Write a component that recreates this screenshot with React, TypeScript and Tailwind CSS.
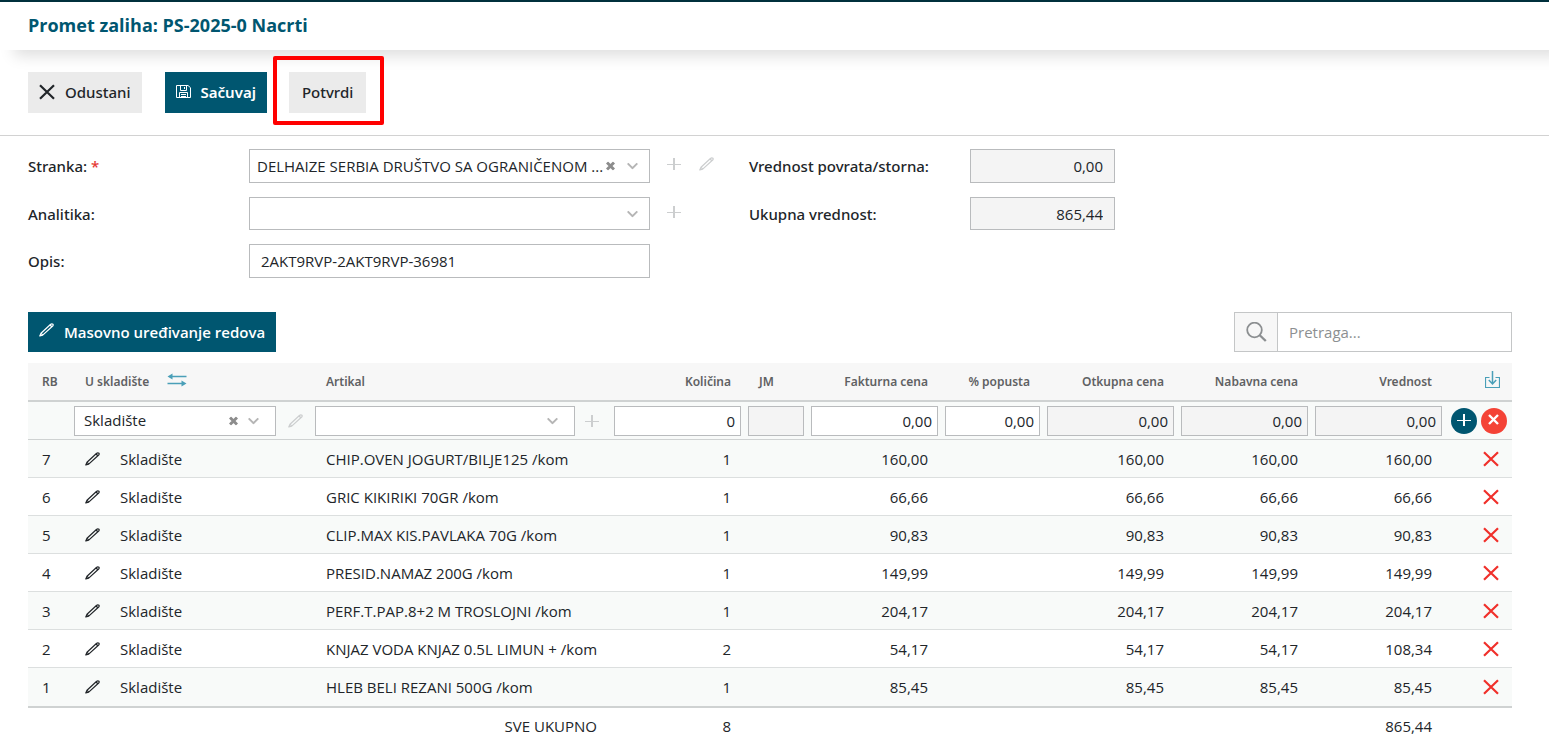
import type { ReactNode } from "react";

const ROWS = [
  { rb: 7, item: "CHIP.OVEN JOGURT/BILJE125 /kom", qty: 1, price: "160,00", total: "160,00" },
  { rb: 6, item: "GRIC KIKIRIKI 70GR /kom", qty: 1, price: "66,66", total: "66,66" },
  { rb: 5, item: "CLIP.MAX KIS.PAVLAKA 70G /kom", qty: 1, price: "90,83", total: "90,83" },
  { rb: 4, item: "PRESID.NAMAZ 200G /kom", qty: 1, price: "149,99", total: "149,99" },
  { rb: 3, item: "PERF.T.PAP.8+2 M TROSLOJNI /kom", qty: 1, price: "204,17", total: "204,17" },
  { rb: 2, item: "KNJAZ VODA KNJAZ 0.5L LIMUN + /kom", qty: 2, price: "54,17", total: "108,34" },
  { rb: 1, item: "HLEB BELI REZANI 500G /kom", qty: 1, price: "85,45", total: "85,45" },
];

function Cross({ className = "" }: { className?: string }) {
  return (
    <svg viewBox="0 0 16 16" className={className} fill="none" stroke="currentColor" strokeWidth="2.2" aria-hidden="true">
      <path d="M1 1.2 15 14.8M15 1.2 1 14.8" />
    </svg>
  );
}

function Pencil({ className = "" }: { className?: string }) {
  return (
    <svg width="15" height="14" viewBox="0 0 15 14" className={className} fill="none" stroke="currentColor" strokeWidth="1.2" strokeLinejoin="round" aria-hidden="true">
      <path d="M.8 13 2 10.2 11.4 1.5Q12.8.3 13.9 1.2 14.6 2.1 13.4 3.3L3.7 12.1ZM2 10.2 3.7 12.1M11 2 12.9 3.8" />
    </svg>
  );
}

function Plus({ className = "" }: { className?: string }) {
  return (
    <svg width="14" height="14" viewBox="0 0 14 14" className={className} fill="none" stroke="currentColor" aria-hidden="true">
      <path d="M7 1V13" strokeWidth="2" />
      <path d="M0 7.5H14" />
    </svg>
  );
}

function Floppy() {
  return (
    <svg width="15" height="14" viewBox="0 0 15 14" fill="none" stroke="currentColor" aria-hidden="true">
      <path d="M.5.5H12L14.5 2.7V12.5H.5Z" />
      <path d="M4.5.5V5.5H10.5V.5M8.5 2V4M3.5 12.5V7.5H11.5V12.5M5 9.5H10M5 11.5H10" />
    </svg>
  );
}

function FieldLabel({ htmlFor, children }: { htmlFor: string; children: ReactNode }) {
  return (
    <label htmlFor={htmlFor} className="w-[221px] font-['Noto_Sans',sans-serif] font-medium">
      {children}
    </label>
  );
}

function SelectBox({ id, label, options, className, clearable = false, inCell = false }: {
  id: string;
  label?: string;
  options: string[];
  className: string;
  clearable?: boolean;
  inCell?: boolean;
}) {
  return (
    <div className={`relative ${className}`}>
      <select
        id={id}
        aria-label={label}
        className={`block h-full w-full appearance-none border border-[#b9bbbd] bg-white pr-[44px] outline-none ${inCell ? "pb-[2px] pl-[9px]" : "pl-[7px]"}`}
      >
        {options.map((o) => (
          <option key={o}>{o}</option>
        ))}
      </select>
      {clearable && (
        <button type="button" aria-label="Obriši" className={`absolute top-1/2 -translate-y-1/2 text-[#8c8c8c] ${inCell ? "right-[38px]" : "right-[35px]"}`}>
          <svg width="9" height="9" viewBox="0 0 9 9" stroke="currentColor" strokeWidth="3" className="block">
            <path d="M1 1 8 8M8 1 1 8" />
          </svg>
        </button>
      )}
      <svg width="11" height="7" viewBox="0 0 11 7" fill="none" stroke="#b5b5b5" strokeWidth="2" className={`pointer-events-none absolute top-1/2 -translate-y-1/2 ${inCell ? "right-[17px]" : "right-3"}`}>
        <path d="M.7.9 5.5 5.6 10.3.9" />
      </svg>
    </div>
  );
}

function Amount({ label, value, readOnly = false }: { label: string; value: string; readOnly?: boolean }) {
  return (
    <input
      aria-label={label}
      defaultValue={value}
      readOnly={readOnly}
      className="block h-[30px] w-full border border-[#b9bbbd] bg-white px-[5px] text-right outline-none read-only:bg-[#f4f4f4]"
    />
  );
}

function Th({ children, right = false }: { children?: ReactNode; right?: boolean }) {
  return (
    <th className={`h-[39px] border-b-2 border-[#cfd2d2] font-semibold ${right ? "pr-[14px] text-right" : "pl-[14px] text-left"}`}>
      {children}
    </th>
  );
}

export default function App() {
  return (
    <div className="min-h-screen bg-white font-['Open_Sans','Noto_Sans',sans-serif] text-[15px] leading-5 text-[#212529]">
      <header className="relative h-[50px] border-t-2 border-[#00303c] bg-white px-7 shadow-[14px_6px_14px_rgba(0,0,0,0.13)]">
        <h1 className="pt-[11px] text-lg leading-6 font-bold text-[#005670]">Promet zaliha: PS-2025-0 Nacrti</h1>
      </header>

      {/* Toolbar */}
      <div className="flex border-b border-[#d2d2d2] px-7 pt-[22px] pb-[22px] font-['Noto_Sans',sans-serif] font-medium">
        <button type="button" className="flex h-[41px] items-center gap-[10px] bg-[#ebebeb] px-[11px] pb-[2px]">
          <Cross className="h-4 w-4" />
          Odustani
        </button>
        <button type="button" className="ml-[23px] flex h-[41px] items-center gap-[10px] bg-[#005670] px-[11px] pb-[2px] font-semibold text-white">
          <Floppy />
          Sačuvaj
        </button>
        <div className="relative ml-[22px]">
          <button type="button" className="h-[41px] bg-[#ebebeb] px-[13px] pb-[2px]">Potvrdi</button>
          <span className="pointer-events-none absolute -top-4 -right-[18px] -bottom-3 -left-4 rounded-[2px] border-4 border-[#ff0000]" />
        </div>
      </div>

      {/* Document header */}
      <div className="flex px-7 pt-[13px]">
        <div className="flex w-[721px] flex-col gap-[14px]">
          <div className="flex items-center">
            <FieldLabel htmlFor="stranka">
              Stranka: <span className="text-[#e53935]">*</span>
            </FieldLabel>
            <SelectBox id="stranka" clearable options={["DELHAIZE SERBIA DRUŠTVO SA OGRANIČENOM ..."]} className="h-[34px] w-[401px]" />
            <button type="button" aria-label="Dodaj stranku" className="ml-[17px] pb-1 text-[#cccecf]"><Plus /></button>
            <button type="button" aria-label="Uredi stranku" className="ml-[18px] pb-1 text-[#cccecf]"><Pencil /></button>
          </div>
          <div className="flex items-center">
            <FieldLabel htmlFor="analitika">Analitika:</FieldLabel>
            <SelectBox id="analitika" options={[""]} className="h-[33px] w-[401px]" />
            <button type="button" aria-label="Dodaj analitiku" className="ml-[17px] pb-1 text-[#cccecf]"><Plus /></button>
          </div>
          <div className="flex items-center">
            <FieldLabel htmlFor="opis">Opis:</FieldLabel>
            <input id="opis" defaultValue="2AKT9RVP-2AKT9RVP-36981" className="h-[34px] w-[401px] border border-[#b9bbbd] px-[11px] outline-none" />
          </div>
        </div>
        <div className="flex flex-col gap-[14px]">
          <div className="flex items-center">
            <FieldLabel htmlFor="povrat">Vrednost povrata/storna:</FieldLabel>
            <input id="povrat" readOnly value="0,00" className="h-[34px] w-[145px] border border-[#b9bbbd] bg-[#f4f4f4] px-[11px] text-right outline-none" />
          </div>
          <div className="flex items-center">
            <FieldLabel htmlFor="ukupno">Ukupna vrednost:</FieldLabel>
            <input id="ukupno" readOnly value="865,44" className="h-[33px] w-[145px] border border-[#b9bbbd] bg-[#f4f4f4] px-[11px] text-right outline-none" />
          </div>
        </div>
      </div>

      <main className="pt-[34px] pr-[37px] pl-7">
        <div className="flex items-center justify-between">
          <button type="button" className="flex h-10 items-center gap-[10px] bg-[#005670] px-[11px] font-semibold text-white">
            <Pencil className="mb-1" />
            Masovno uređivanje redova
          </button>
          <div className="flex h-10 w-[278px] border border-[#c4c6c7]">
            <button type="button" aria-label="Traži" className="flex w-[43px] items-center justify-center border-r border-[#c4c6c7] bg-[#f7f7f7] text-[#8c8f91]">
              <svg width="22" height="20" viewBox="0 0 22 20" fill="none" stroke="currentColor" strokeWidth="1.8">
                <circle cx="9.5" cy="8" r="7.3" />
                <path d="M14.5 13 20.8 19" strokeWidth="2.4" />
              </svg>
            </button>
            <input aria-label="Pretraga" placeholder="Pretraga..." className="min-w-0 flex-1 px-[11px] outline-none placeholder:text-[#8c8f91]" />
          </div>
        </div>

        {/* Line items */}
        <table className="mt-[11px] w-full table-fixed border-separate border-spacing-0">
          <colgroup>
            <col className="w-[43px]" />
            <col className="w-[241px]" />
            <col />
            <col className="w-[134px]" />
            <col className="w-[63px]" />
            <col className="w-[134px]" />
            <col className="w-[102px]" />
            <col className="w-[134px]" />
            <col className="w-[134px]" />
            <col className="w-[134px]" />
            <col className="w-[66px]" />
          </colgroup>
          <thead className="bg-[#f7f7f7] font-['Noto_Sans',sans-serif] text-xs text-[#5f6163]">
            <tr>
              <Th>RB</Th>
              <Th>
                <span className="flex items-center gap-[18px]">
                  U skladište
                  <svg width="20" height="14" viewBox="0 0 20 14" className="mb-1" fill="#4a9fb8" stroke="#4a9fb8">
                    <path d="M3 3.5H19.5M.5 10.5H17" strokeWidth="1.4" />
                    <path d="M5.5.5V6.5L.5 3.5ZM14.5 7.5V13.5L19.5 10.5Z" stroke="none" />
                  </svg>
                </span>
              </Th>
              <Th>Artikal</Th>
              <Th right>Količina</Th>
              <Th>JM</Th>
              <Th right>Fakturna cena</Th>
              <Th right>% popusta</Th>
              <Th right>Otkupna cena</Th>
              <Th right>Nabavna cena</Th>
              <Th right>Vrednost</Th>
              <Th right>
                <button type="button" aria-label="Preuzmi" className="block pb-1 pl-[39px] text-[#4a9fb8]">
                  <svg width="15" height="18" viewBox="0 0 15 18" fill="none" stroke="currentColor">
                    <path d="M4.5 6.5H.5V16.5H14.5V6.5H10.5" strokeWidth="1.2" />
                    <path d="M7.5 0V13M3.8 9 7.5 13 11.2 9" strokeWidth="1.5" />
                  </svg>
                </button>
              </Th>
            </tr>
          </thead>
          <tbody>
            <tr className="bg-[#f8faf9] [&>td]:h-[38px] [&>td]:border-b [&>td]:border-[#cfd2d2] [&>td]:pr-1 [&>td]:pl-[3px]">
              <td />
              <td>
                <div className="flex items-center">
                  <SelectBox id="skladiste" label="U skladište" clearable inCell options={["Skladište"]} className="h-[30px] w-[202px]" />
                  <button type="button" aria-label="Uredi skladište" className="ml-3 text-[#cccecf]"><Pencil /></button>
                </div>
              </td>
              <td>
                <div className="flex items-center">
                  <SelectBox id="artikal" label="Artikal" inCell options={[""]} className="h-[30px] min-w-0 flex-1" />
                  <button type="button" aria-label="Dodaj artikal" className="mr-2 ml-[10px] text-[#cccecf]"><Plus /></button>
                </div>
              </td>
              <td><Amount label="Količina" value="0" /></td>
              <td><Amount label="JM" value="" readOnly /></td>
              <td><Amount label="Fakturna cena" value="0,00" /></td>
              <td><Amount label="% popusta" value="0,00" /></td>
              <td><Amount label="Otkupna cena" value="0,00" readOnly /></td>
              <td><Amount label="Nabavna cena" value="0,00" readOnly /></td>
              <td><Amount label="Vrednost" value="0,00" readOnly /></td>
              <td>
                <div className="flex justify-center gap-1">
                  <button type="button" aria-label="Dodaj red" className="flex h-[26px] w-[26px] items-center justify-center rounded-full bg-[#005670] pb-[2px] text-white"><Plus /></button>
                  <button type="button" aria-label="Otkaži red" className="flex h-[26px] w-[26px] items-center justify-center rounded-full bg-[#f44336] pb-[2px] text-white">
                    <svg width="11" height="11" viewBox="0 0 11 11" stroke="currentColor" strokeWidth="2.4"><path d="M1 1 10 10M10 1 1 10" /></svg>
                  </button>
                </div>
              </td>
            </tr>
            {ROWS.map((r) => (
              <tr key={r.rb} className="odd:bg-white even:bg-[#f8faf9] [&>td]:h-[38px] [&>td]:border-b [&>td]:border-[#dcdfdf] [&>td]:px-[14px] last:[&>td]:border-b-0">
                <td>{r.rb}</td>
                <td>
                  <div className="flex items-center gap-5">
                    <button type="button" aria-label={`Uredi red ${r.rb}`}><Pencil /></button>
                    Skladište
                  </div>
                </td>
                <td className="whitespace-nowrap">{r.item}</td>
                <td className="text-right">{r.qty}</td>
                <td />
                <td className="text-right">{r.price}</td>
                <td />
                <td className="text-right">{r.price}</td>
                <td className="text-right">{r.price}</td>
                <td className="text-right">{r.total}</td>
                <td>
                  <button type="button" aria-label={`Obriši red ${r.rb}`} className="ml-[23px] block text-[#f0302b]"><Cross className="h-4 w-4" /></button>
                </td>
              </tr>
            ))}
          </tbody>
          <tfoot>
            <tr className="[&>td]:h-[38px] [&>td]:border-t-2 [&>td]:border-[#cfd2d2] [&>td]:px-[14px] [&>td]:text-right">
              <td colSpan={3}>SVE UKUPNO</td>
              <td>8</td>
              <td colSpan={5} />
              <td>865,44</td>
              <td />
            </tr>
          </tfoot>
        </table>
      </main>
    </div>
  );
}
